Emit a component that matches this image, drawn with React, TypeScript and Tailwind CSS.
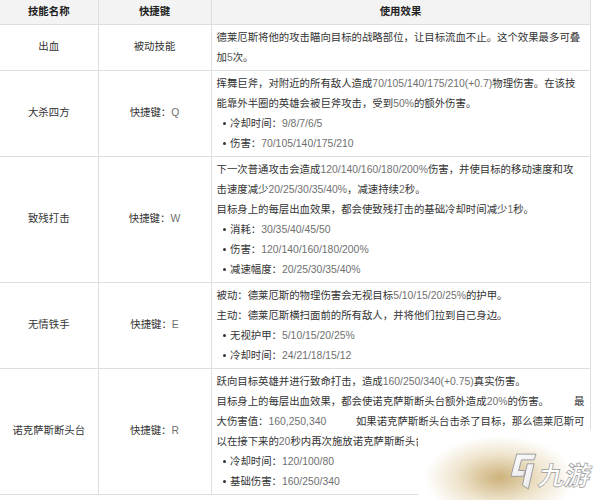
import React from 'react';

// split latin/digit runs so they can be tinted lighter, like the source page
function T({ children }: { children: string }) {
  const parts = children.split(/([0-9A-Za-z/.()+%,]+)/);
  return (
    <>
      {parts.map((p, i) =>
        i % 2 === 1 ? (
          <span key={i} className="text-[#707070]">{p}</span>
        ) : (
          <React.Fragment key={i}>{p}</React.Fragment>
        )
      )}
    </>
  );
}

function Line({ text }: { text: string }) {
  return <div className="whitespace-nowrap"><T>{text}</T></div>;
}

function Bullet({ text }: { text: string }) {
  return (
    <div className="flex items-center whitespace-nowrap pl-[6px]">
      <span className="mr-[4px] inline-block h-[3.5px] w-[3.5px] rounded-full bg-[#333]" />
      <T>{text}</T>
    </div>
  );
}

type Row = { name: string; key: string; body: React.ReactNode };

const rows: Row[] = [
  {
    name: '出血',
    key: '被动技能',
    body: (
      <>
        <Line text="德莱厄斯将他的攻击瞄向目标的战略部位，让目标流血不止。这个效果最多可叠" />
        <Line text="加5次。" />
      </>
    ),
  },
  {
    name: '大杀四方',
    key: '快捷键：Q',
    body: (
      <>
        <Line text="挥舞巨斧，对附近的所有敌人造成70/105/140/175/210(+0.7)物理伤害。在该技" />
        <Line text="能靠外半圈的英雄会被巨斧攻击，受到50%的额外伤害。" />
        <Bullet text="冷却时间：9/8/7/6/5" />
        <Bullet text="伤害：70/105/140/175/210" />
      </>
    ),
  },
  {
    name: '致残打击',
    key: '快捷键：W',
    body: (
      <>
        <Line text="下一次普通攻击会造成120/140/160/180/200%伤害，并使目标的移动速度和攻" />
        <Line text="击速度减少20/25/30/35/40%，减速持续2秒。" />
        <Line text="目标身上的每层出血效果，都会使致残打击的基础冷却时间减少1秒。" />
        <Bullet text="消耗：30/35/40/45/50" />
        <Bullet text="伤害：120/140/160/180/200%" />
        <Bullet text="减速幅度：20/25/30/35/40%" />
      </>
    ),
  },
  {
    name: '无情铁手',
    key: '快捷键：E',
    body: (
      <>
        <Line text="被动：德莱厄斯的物理伤害会无视目标5/10/15/20/25%的护甲。" />
        <Line text="主动：德莱厄斯横扫面前的所有敌人，并将他们拉到自己身边。" />
        <Bullet text="无视护甲：5/10/15/20/25%" />
        <Bullet text="冷却时间：24/21/18/15/12" />
      </>
    ),
  },
  {
    name: '诺克萨斯断头台',
    key: '快捷键：R',
    body: (
      <>
        <Line text="跃向目标英雄并进行致命打击，造成160/250/340(+0.75)真实伤害。" />
        <div className="flex justify-between whitespace-nowrap">
          <span><T>目标身上的每层出血效果，都会使诺克萨斯断头台额外造成20%的伤害。</T></span>
          <span>最</span>
        </div>
        <div className="flex justify-between whitespace-nowrap">
          <span><T>大伤害值：160,250,340</T></span>
          <span>如果诺克萨斯断头台击杀了目标，那么德莱厄斯可</span>
        </div>
        <Line text="以在接下来的20秒内再次施放诺克萨斯断头台。" />
        <Bullet text="冷却时间：120/100/80" />
        <Bullet text="基础伤害：160/250/340" />
      </>
    ),
  },
];

function Logo() {
  return (
    <svg width="29" height="39" viewBox="0 0 30 40" className="shrink-0">
      <defs>
        <linearGradient id="lg" x1="0" y1="0" x2="1" y2="1">
          <stop offset="0" stopColor="#ffffff" />
          <stop offset="1" stopColor="#e4e4e4" />
        </linearGradient>
      </defs>
      <g fill="url(#lg)" stroke="#999" strokeWidth="1" strokeLinejoin="round">
        <path d="M9 2 L29 2 L27 8 L14 8 L11 19 L18 19 L16 25 L3 25 Z" />
        <path d="M20 12 L27 12 L21 38 L15 34 Z" />
      </g>
    </svg>
  );
}

export default function App() {
  return (
    <div className="relative h-[500px] w-[595px] overflow-hidden bg-white font-['Liberation_Sans','Noto_Sans_CJK_SC',sans-serif] text-[10.4px] leading-[20px] text-[#333]">
      <table className="w-[590px] table-fixed border-collapse">
        <colgroup>
          <col className="w-[98px]" />
          <col className="w-[113px]" />
          <col className="w-[379px]" />
        </colgroup>
        <thead>
          <tr className="h-[24px] bg-[#f3f3f3] font-bold text-[#222]">
            <th className="border-r border-b border-[#dedede] text-center">技能名称</th>
            <th className="border-x border-b border-[#dedede] text-center">快捷键</th>
            <th className="border-l border-b border-r border-[#dedede] text-center">使用效果</th>
          </tr>
        </thead>
        <tbody>
          {rows.map(r => (
            <tr key={r.name}>
              <td className="border-r border-b border-[#dedede] text-center align-middle">{r.name}</td>
              <td className="border-x border-b border-[#dedede] text-center align-middle">
                <T>{r.key}</T>
              </td>
              <td className="border border-t-0 border-[#dedede] px-[5px] pt-[3px] pb-[2px] align-top">
                {r.body}
              </td>
            </tr>
          ))}
        </tbody>
      </table>

      {/* watermark */}
      <div className="absolute top-[430px] left-[418px] h-[70px] w-[177px] bg-white">
        <div className="flex h-full w-full items-end justify-end bg-[radial-gradient(ellipse_50%_70%_at_46%_68%,rgba(196,164,100,0.85),rgba(222,200,152,0.45)_50%,rgba(255,255,255,0)_85%)] pr-[4px] pb-[9px]">
          <Logo />
          <span className="ml-[2px] -skew-x-12 text-[26px] leading-[30px] font-bold text-white [-webkit-text-stroke:0.7px_#999]">
            九游
          </span>
        </div>
      </div>
    </div>
  );
}
